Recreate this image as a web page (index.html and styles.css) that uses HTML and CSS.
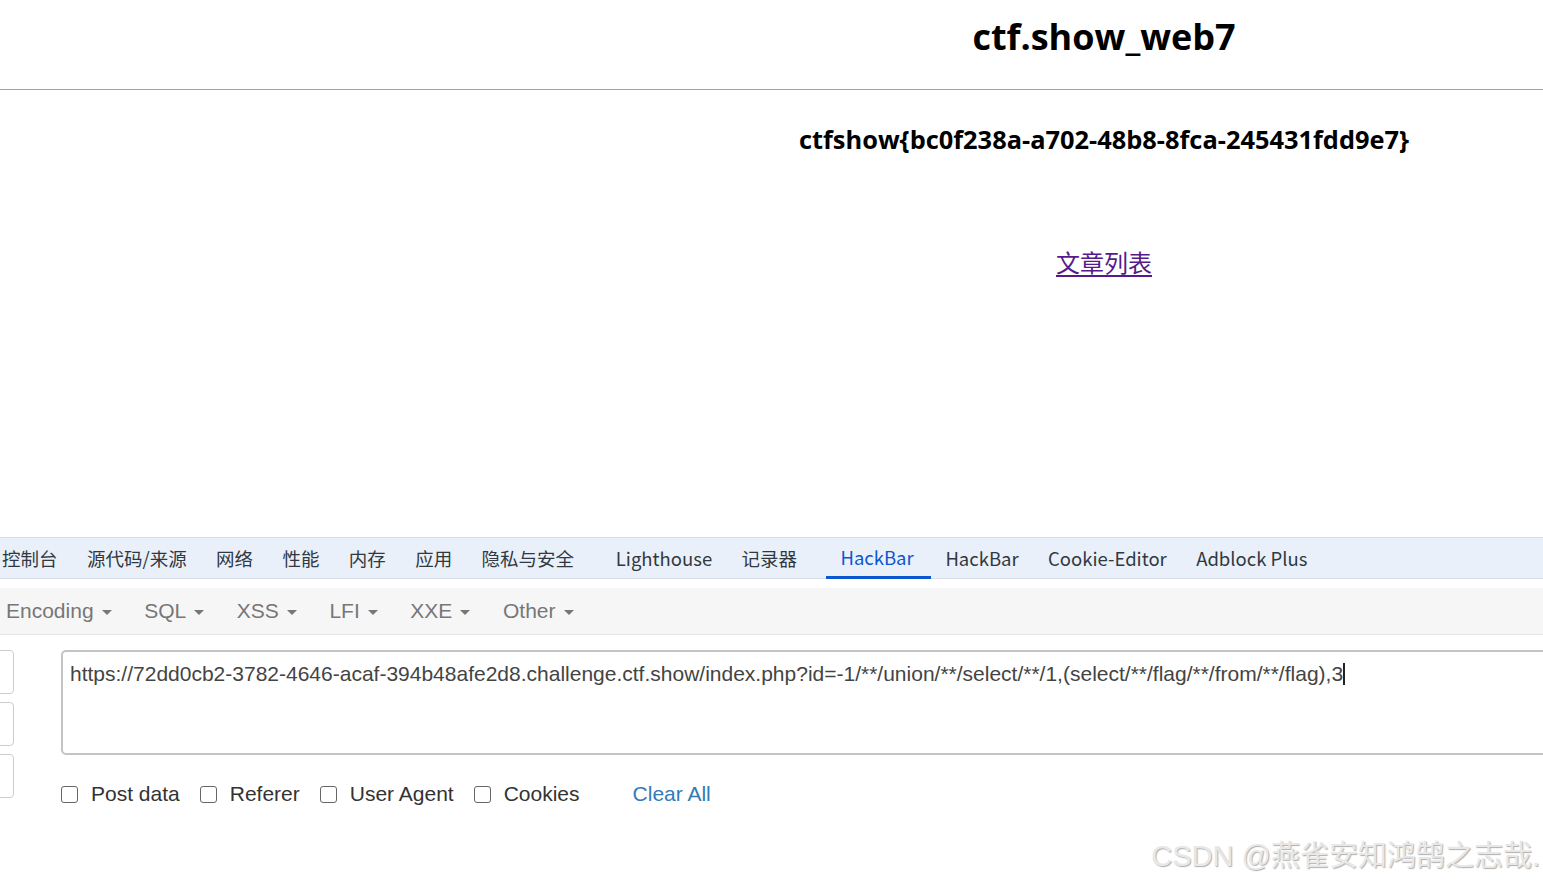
FILE: index.html
```html
<!DOCTYPE html>
<html lang="zh">
<head>
<meta charset="utf-8">
<title>ctf.show_web7</title>
<link rel="stylesheet" href="styles.css">
</head>
<body>
<div class="page">
  <header class="head">
    <h1 class="title">ctf.show_web7</h1>
  </header>
  <hr class="rule">
  <div class="content">
    <div class="flag">ctfshow{bc0f238a-a702-48b8-8fca-245431fdd9e7}</div>
    <a class="list-link" href="#">文章列表</a>
  </div>
</div>
<section class="devtools">
  <nav class="tabs">
    <span class="tab">控制台</span>
    <span class="tab">源代码/来源</span>
    <span class="tab">网络</span>
    <span class="tab">性能</span>
    <span class="tab">内存</span>
    <span class="tab">应用</span>
    <span class="tab">隐私与安全</span>
    <span class="tab tab-wide">Lighthouse</span>
    <span class="tab">记录器</span>
    <span class="tab active">HackBar</span>
    <span class="tab">HackBar</span>
    <span class="tab">Cookie-Editor</span>
    <span class="tab">Adblock Plus</span>
  </nav>
  <div class="menubar">
    <span class="menu">Encoding <i class="caret"></i></span>
    <span class="menu">SQL <i class="caret"></i></span>
    <span class="menu">XSS <i class="caret"></i></span>
    <span class="menu">LFI <i class="caret"></i></span>
    <span class="menu">XXE <i class="caret"></i></span>
    <span class="menu">Other <i class="caret"></i></span>
  </div>
  <div class="workspace">
    <div class="side">
      <span class="side-btn"></span>
      <span class="side-btn"></span>
      <span class="side-btn"></span>
    </div>
    <div class="main">
      <div class="url-box">https://72dd0cb2-3782-4646-acaf-394b48afe2d8.challenge.ctf.show/index.php?id=-1/**/union/**/select/**/1,(select/**/flag/**/from/**/flag),3<span class="cursor"></span></div>
      <div class="options">
        <label class="opt"><span class="box"></span>Post data</label>
        <label class="opt"><span class="box"></span>Referer</label>
        <label class="opt"><span class="box"></span>User Agent</label>
        <label class="opt"><span class="box"></span>Cookies</label>
        <a class="clear" href="#">Clear All</a>
      </div>
    </div>
  </div>
  <div class="watermark">CSDN @燕雀安知鸿鹄之志哉.</div>
</section>
</body>
</html>
```
FILE: styles.css
```css
html, body {
  margin: 0;
  padding: 0;
  background: #fff;
  overflow: hidden;
}
body {
  width: 1543px;
  height: 883px;
  font-family: "Liberation Sans", Arial, sans-serif;
}
.page {
  height: 537px;
}
.head {
  padding-left: 665px;
  width: 878px;
  text-align: center;
}
.title {
  margin: 0;
  padding-top: 10px;
  height: 79px;
  font-family: "Open Sans", "Noto Sans CJK SC", sans-serif;
  font-weight: 700;
  font-size: 36px;
  line-height: 54px;
  color: #000;
}
.rule {
  margin: 0;
  border: 0;
  border-top: 1px solid #a0a0a0;
  height: 0;
}
.content {
  padding-left: 665px;
  width: 878px;
  text-align: center;
}
.flag {
  padding-top: 32px;
  font-family: "Open Sans", "Noto Sans CJK SC", sans-serif;
  font-weight: 700;
  font-size: 25.4px;
  line-height: 34px;
  color: #000;
}
.list-link {
  display: inline-block;
  margin-top: 89px;
  font-family: "Noto Sans CJK SC", sans-serif;
  font-size: 24px;
  line-height: 34px;
  color: #551a8b;
  text-decoration: underline;
  text-underline-offset: 3px;
}
.devtools {
  position: relative;
  height: 346px;
}
.tabs {
  display: flex;
  align-items: stretch;
  height: 40px;
  background: #eaf0f9;
  border-top: 1px solid #d6dde8;
  border-bottom: 1px solid #d6dde8;
  font-family: "Noto Sans CJK SC", sans-serif;
  font-size: 18.5px;
  color: #303942;
}
.tab {
  display: flex;
  align-items: center;
  padding: 0 14.7px;
  white-space: nowrap;
}
.tab:first-child {
  padding-left: 2px;
}
.tab-wide {
  padding-left: 27px;
}
.tab.active {
  color: #0b57d0;
  border-bottom: 3px solid #0b57d0;
  border-radius: 2px 2px 0 0;
  margin-left: 14px;
  padding-right: 17px;
  margin-bottom: -1px;
}
.menubar {
  margin-top: 9px;
  height: 46px;
  background: #f6f6f6;
  border-bottom: 1px solid #e4e4e4;
  display: flex;
  align-items: center;
  gap: 32.6px;
  padding-left: 6px;
  font-size: 21px;
  color: #777;
}
.menu {
  display: flex;
  align-items: center;
  gap: 8px;
}
.caret {
  display: inline-block;
  width: 0;
  height: 0;
  border-left: 5px solid transparent;
  border-right: 5px solid transparent;
  border-top: 5px solid #777;
  margin-top: 3px;
}
.workspace {
  display: flex;
  padding-top: 15px;
}
.side {
  width: 61px;
  display: flex;
  flex-direction: column;
  gap: 8px;
  margin-left: -10px;
}
.side-btn {
  display: block;
  width: 22px;
  height: 42px;
  border: 1px solid #ccc;
  border-radius: 4px;
}
.main {
  flex: 1;
  margin-left: 10px;
}
.url-box {
  height: 105px;
  margin-right: -20px;
  border: 2px solid #c4c4c4;
  border-radius: 5px;
  padding: 10px 7px;
  box-sizing: border-box;
  font-size: 21px;
  line-height: 24px;
  color: #444;
  white-space: nowrap;
  overflow: hidden;
}
.cursor {
  display: inline-block;
  width: 2px;
  height: 22px;
  background: #222;
  vertical-align: -4px;
}
.options {
  display: flex;
  align-items: center;
  margin-top: 27px;
  font-size: 21px;
  color: #333;
}
.opt {
  display: flex;
  align-items: center;
  margin-right: 20px;
}
.box {
  display: inline-block;
  width: 15px;
  height: 15px;
  border: 1px solid #666;
  border-radius: 3px;
  margin-right: 13px;
}
.clear {
  margin-left: 33px;
  color: #337ab7;
  text-decoration: none;
}
.watermark {
  position: absolute;
  right: 3px;
  bottom: 9px;
  font-family: "Liberation Sans", "Noto Sans CJK SC", sans-serif;
  font-size: 29px;
  color: #e8e8e8;
  text-shadow: 1px 1px 1px #b0b0b0;
  white-space: nowrap;
}
```
